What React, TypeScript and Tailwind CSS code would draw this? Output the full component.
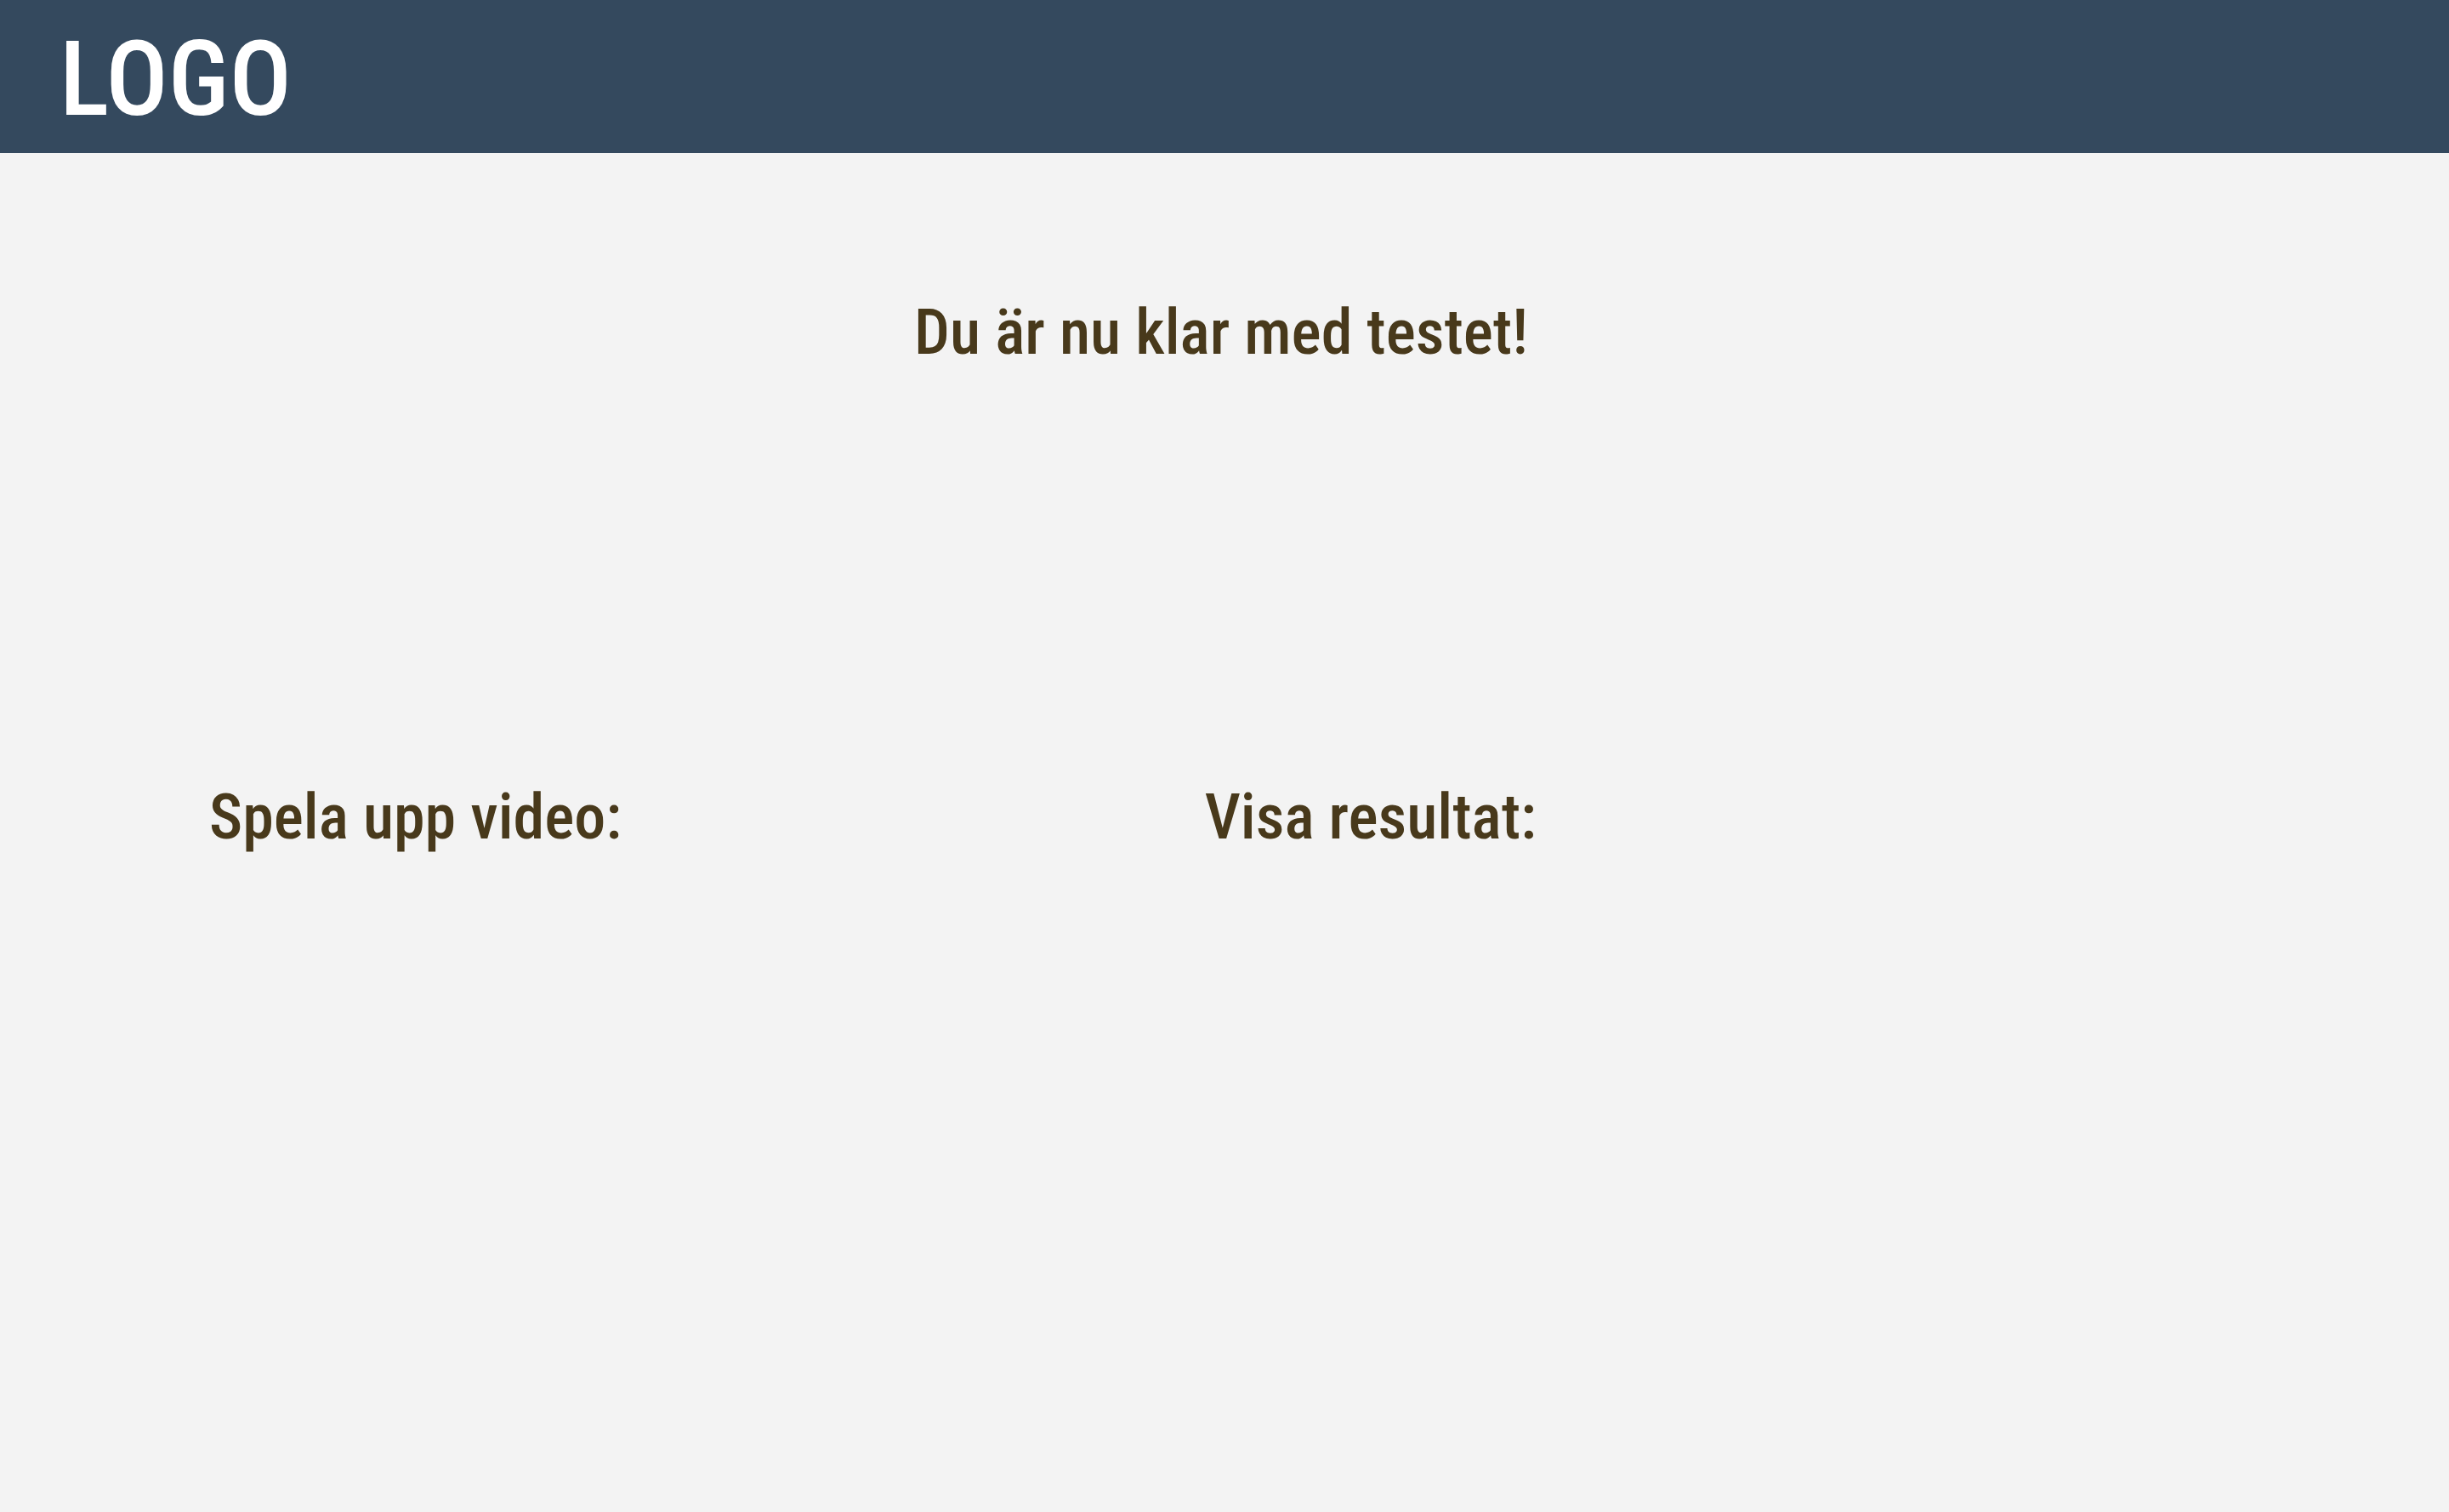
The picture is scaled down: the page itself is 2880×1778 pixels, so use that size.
export default function App() {
  return (
    <div className="flex min-h-screen flex-col bg-[#f3f3f3] font-['Roboto_Condensed',Roboto,sans-serif] font-medium text-[#48391b]">
      <header className="flex h-[180px] items-center bg-[#34495e] px-[70px] pt-2">
        <a href="#" className="text-[122px] leading-none text-white">
          LOGO
        </a>
      </header>
      <main className="pt-[169px]">
        <h1 className="pr-2 text-center text-[74px] leading-[84px]">Du är nu klar med testet!</h1>
        <div className="mt-[486px] grid grid-cols-[4fr_5fr] pl-[246px]">
          <h2 className="text-[74px] leading-[84px]">Spela upp video:</h2>
          <h2 className="text-[74px] leading-[84px]">Visa resultat:</h2>
        </div>
      </main>
    </div>
  );
}
